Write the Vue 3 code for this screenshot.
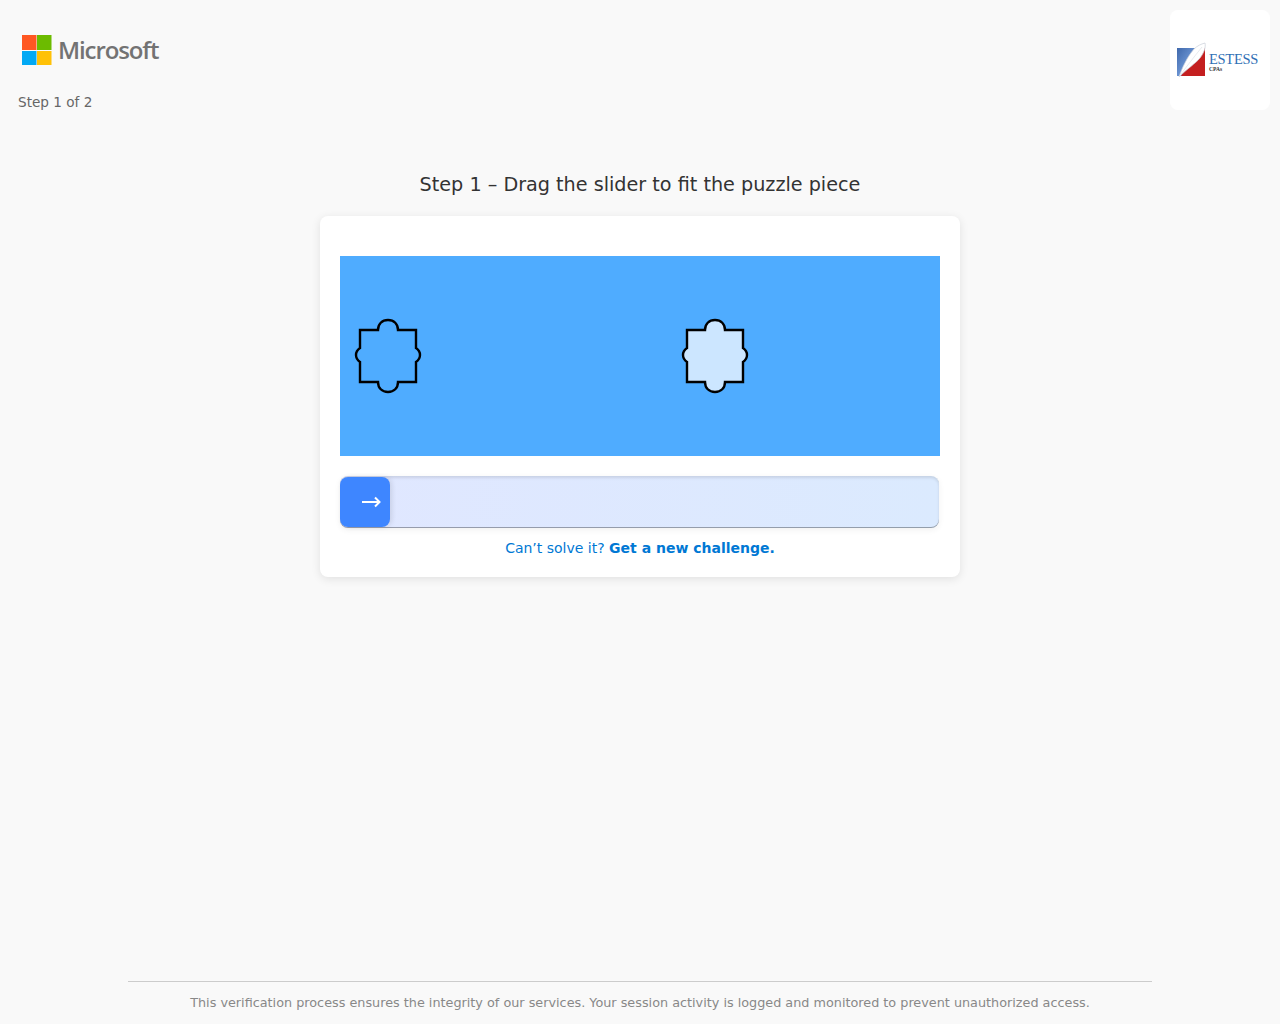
<template>
  <div class="page">
    <header class="top">
      <div class="brand">
        <div class="ms-logo">
          <svg class="ms-mark" width="30" height="30" viewBox="0 0 30 30">
            <rect x="0" y="0" width="14.5" height="15" fill="#ff5722" />
            <rect x="15" y="0" width="14.5" height="15" fill="#6cbb00" />
            <rect x="0" y="16" width="14.5" height="14" fill="#03a9f4" />
            <rect x="15" y="16" width="14.5" height="14" fill="#ffc107" />
          </svg>
          <span class="ms-name">Microsoft</span>
        </div>
        <div class="step-count">Step 1 of 2</div>
      </div>
      <div class="client-logo">
        <svg width="100" height="100" viewBox="0 0 100 100">
          <defs>
            <linearGradient id="blueSide" x1="0" y1="0" x2="1" y2="1">
              <stop offset="0" stop-color="#3f68ab" />
              <stop offset="0.6" stop-color="#6f98d6" />
              <stop offset="1" stop-color="#4a7fc4" />
            </linearGradient>
          </defs>
          <rect x="7" y="38" width="28" height="28" fill="#c41f1f" />
          <path d="M7 38H26L11 66H7Z" fill="url(#blueSide)" />
          <path d="M9 67C12 58 17 47 24 39C27 36 31 34 35 33C36 37 34 43 30 48C26 53 17 59 9 67Z" fill="#fff" stroke="#c8ced8" stroke-width=".7" />
          <path d="M11 64C17 56 24 47 32 37" fill="none" stroke="#d9dde3" stroke-width=".6" />
          <text x="39" y="53.5" class="estess">ESTESS</text>
          <text x="39" y="60.5" class="cpas">CPAs</text>
        </svg>
      </div>
    </header>

    <main class="content">
      <h1 class="title">Step 1 – Drag the slider to fit the puzzle piece</h1>
      <section class="card">
        <div class="canvas">
          <svg class="piece piece-hole" width="80" height="80" viewBox="0 0 80 80">
            <path :d="piecePath" fill="none" stroke="#000" stroke-width="2.4" />
          </svg>
          <svg class="piece piece-target" width="80" height="80" viewBox="0 0 80 80">
            <path :d="piecePath" fill="#cce6ff" stroke="#000" stroke-width="2.4" />
          </svg>
        </div>
        <div class="slider">
          <div class="handle">
            <svg width="20" height="12" viewBox="0 0 20 12">
              <path d="M1 6H18.5M14 1.5L18.5 6L14 10.5" fill="none" stroke="#fff" stroke-width="2" />
            </svg>
          </div>
        </div>
        <p class="help">Can’t solve it? <strong>Get a new challenge.</strong></p>
      </section>
    </main>

    <footer class="foot">
      This verification process ensures the integrity of our services. Your session activity is logged and monitored to prevent unauthorized access.
    </footer>
  </div>
</template>

<script setup>
const piecePath = 'M10 15H28C28 9 32 5 38 5C44 5 48 9 48 15H66V33C69 35 70 37 70 40C70 43 69 45 66 47V67H48C48 73 44 77 38 77C32 77 28 73 28 67H10V47C7 45 6 43 6 40C6 37 7 35 10 33Z'
</script>

<style>
body {
  background: #f9f9f9;
}
</style>

<style scoped>
.page {
  min-height: 1024px;
  display: flex;
  flex-direction: column;
  font-family: "DejaVu Sans", sans-serif;
  box-sizing: border-box;
}

/* Шапка */
.top {
  display: flex;
  justify-content: space-between;
  align-items: flex-start;
  padding: 10px 10px 0 18px;
}

.brand {
  padding-top: 25px;
}

.ms-logo {
  display: flex;
  align-items: center;
  height: 30px;
  padding-left: 4px;
}

.ms-mark {
  flex-shrink: 0;
}

.ms-name {
  margin-left: 6px;
  margin-top: -2px;
  font-family: "Open Sans", sans-serif;
  font-size: 24px;
  font-weight: 600;
  letter-spacing: -1.1px;
  color: #737373;
}

.step-count {
  margin-top: 29px;
  font-size: 13.6px;
  line-height: 17px;
  color: #666;
}

.client-logo {
  width: 100px;
  height: 100px;
  background: #fff;
  border-radius: 8px;
}

.estess {
  font-family: "Liberation Serif", serif;
  font-size: 14.5px;
  letter-spacing: -0.3px;
  fill: #2f6fb5;
}

.cpas {
  font-family: "Liberation Serif", serif;
  font-size: 5.5px;
  font-weight: 700;
  fill: #333;
}

/* Основной блок */
.content {
  display: flex;
  flex-direction: column;
  align-items: center;
}

.title {
  margin: 62px 0 19px;
  font-size: 19.2px;
  line-height: 24px;
  font-weight: 400;
  color: #333;
}

.card {
  width: 640px;
  box-sizing: border-box;
  padding: 40px 20px 20px;
  background: #fff;
  border-radius: 8px;
  box-shadow: 0 2px 10px rgba(0, 0, 0, 0.1);
}

.canvas {
  position: relative;
  height: 200px;
  background: #4facff;
}

.piece {
  position: absolute;
  top: 59px;
}

.piece-hole {
  left: 10px;
}

.piece-target {
  left: 337px;
}

.slider {
  width: 599px;
  height: 52px;
  margin-top: 20px;
  box-sizing: border-box;
  padding-top: 1px;
  border-radius: 8px;
  background: linear-gradient(90deg, #e0e7ff, #dbeafe);
  box-shadow: inset 0 2px 3px rgba(0, 0, 0, 0.1), inset 0 -1px 0 rgba(0, 0, 0, 0.32), 0 2px 6px rgba(0, 0, 0, 0.06);
}

.handle {
  width: 50px;
  height: 50px;
  display: flex;
  align-items: center;
  justify-content: center;
  padding-left: 12px;
  box-sizing: border-box;
  background: #3e86ff;
  border-radius: 8px;
  box-shadow: 2px 0 5px rgba(0, 0, 0, 0.1);
}

.help {
  margin: 12px 0 0;
  text-align: center;
  font-size: 14px;
  line-height: 17px;
  color: #0078d4;
}

.foot {
  margin: auto 128px 0;
  height: 43px;
  box-sizing: border-box;
  border-top: 1px solid #ccc;
  padding-top: 13px;
  text-align: center;
  font-size: 12.8px;
  line-height: 16px;
  color: #888;
}
</style>
